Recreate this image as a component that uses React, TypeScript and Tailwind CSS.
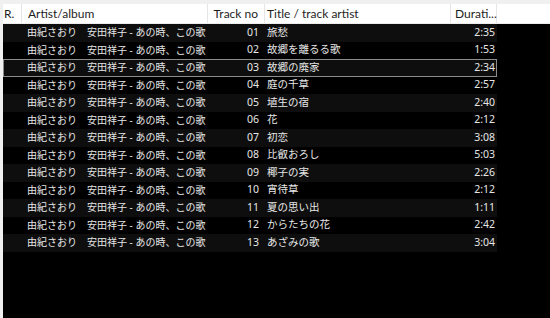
import React from 'react';

const tracks: [string, string, string][] = [
  ['01', '旅愁', '2:35'],
  ['02', '故郷を離るる歌', '1:53'],
  ['03', '故郷の廃家', '2:34'],
  ['04', '庭の千草', '2:57'],
  ['05', '埴生の宿', '2:40'],
  ['06', '花', '2:12'],
  ['07', '初恋', '3:08'],
  ['08', '比叡おろし', '5:03'],
  ['09', '椰子の実', '2:26'],
  ['10', '宵待草', '2:12'],
  ['11', '夏の思い出', '1:11'],
  ['12', 'からたちの花', '2:42'],
  ['13', 'あざみの歌', '3:04'],
];

const rowFont = { fontFamily: '"Noto Sans", "Noto Sans CJK JP", sans-serif' };
const headFont = { fontFamily: 'Lato, "Noto Sans", sans-serif' };

const HeaderCell: React.FC<{ w: string; align?: 'left' | 'right'; children?: React.ReactNode }> = ({ w, align = 'left', children }) => (
  <div
    className={`${w} h-full flex items-center border-r border-[#e5e5e5] whitespace-nowrap ${align === 'right' ? 'justify-end pr-[6px]' : 'pl-[6px]'}`}
  >
    {children}
  </div>
);

export default function App() {
  return (
    <div className="w-[550px] h-[318px] bg-[#f0f0f0] pl-[3px] pt-[4px] flex flex-col overflow-hidden">
      <div className="flex h-[20px] bg-white text-[12px] text-[#1e1e1e] border-b border-[#ececec]" style={headFont}>
        <HeaderCell w="w-[19px] !pl-[1px]">R.</HeaderCell>
        <HeaderCell w="w-[186px]">Artist/album</HeaderCell>
        <HeaderCell w="w-[57px]" align="right">Track no</HeaderCell>
        <HeaderCell w="w-[186px] !pl-[2px]">Title / track artist</HeaderCell>
        <HeaderCell w="w-[46px] !pl-[4px]">Durati...</HeaderCell>
        <div className="flex-1" />
      </div>
      <div className="flex-1 bg-black flex flex-col text-[10.5px] text-[#e6e6e6]" style={rowFont}>
        {tracks.map(([no, title, dur], i) => (
          <div
            key={no}
            className={`w-[494px] h-[17.5px] flex items-center whitespace-nowrap border ${
              i === 2 ? 'border-[#8c8c8c]' : 'border-transparent'
            } ${i % 2 === 0 ? 'bg-[#0e0e0e]' : 'bg-black'}`}
          >
            <div className="w-[18px]" />
            <div className="w-[186px] pl-[5px] whitespace-pre text-[10px]">{'由紀さおり　安田祥子 - あの時、この歌'}</div>
            <div className="w-[57px] text-right pr-[6px]">{no}</div>
            <div className="w-[186px] pl-[2px]">{title}</div>
            <div className="w-[45px] text-right pr-[1px]">{dur}</div>
          </div>
        ))}
      </div>
    </div>
  );
}
